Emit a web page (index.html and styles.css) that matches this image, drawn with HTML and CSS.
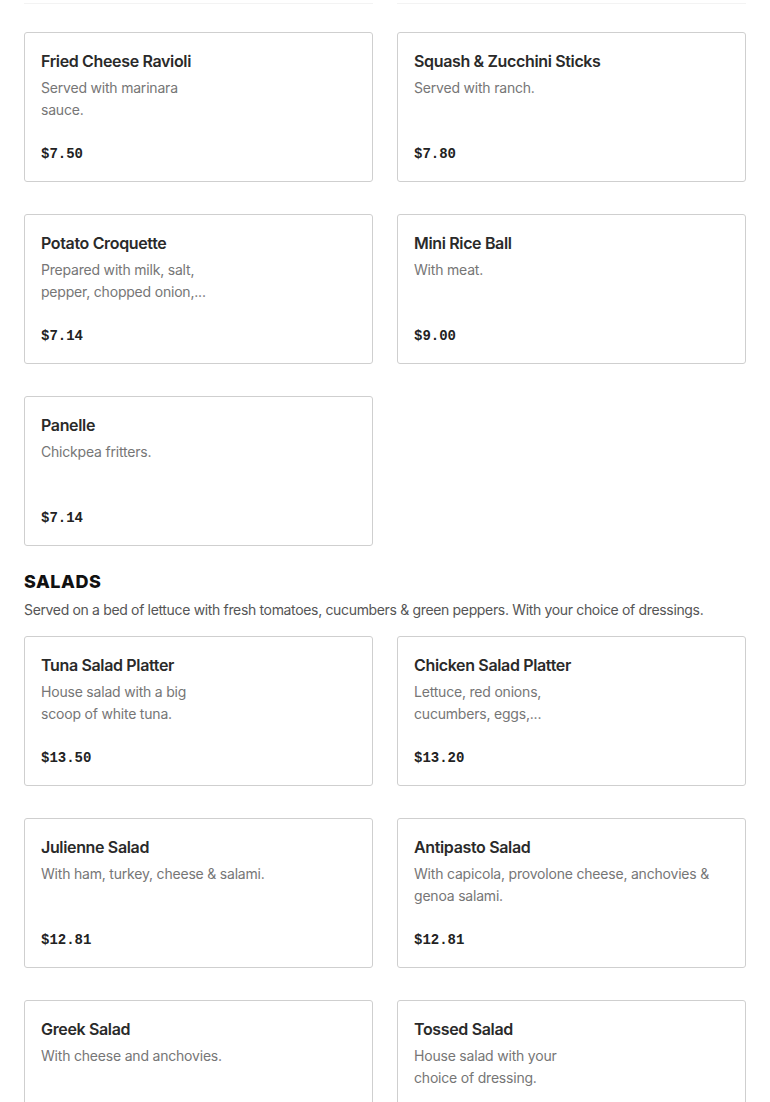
FILE: index.html
```html
<!DOCTYPE html>
<html>
<head>
<meta charset="utf-8">
<link rel="stylesheet" href="styles.css">
</head>
<body>
<div class="page">
  <div class="stub"><div class="stub-card"></div><div class="stub-card"></div></div>

  <div class="grid">
    <div class="card">
      <div class="name">Fried Cheese Ravioli</div>
      <div class="desc">Served with marinara<br>sauce.</div>
      <div class="price">$7.50</div>
    </div>
    <div class="card">
      <div class="name">Squash &amp; Zucchini Sticks</div>
      <div class="desc">Served with ranch.</div>
      <div class="price">$7.80</div>
    </div>
    <div class="card">
      <div class="name">Potato Croquette</div>
      <div class="desc">Prepared with milk, salt,<br>pepper, chopped onion,...</div>
      <div class="price">$7.14</div>
    </div>
    <div class="card">
      <div class="name">Mini Rice Ball</div>
      <div class="desc">With meat.</div>
      <div class="price">$9.00</div>
    </div>
    <div class="card">
      <div class="name">Panelle</div>
      <div class="desc">Chickpea fritters.</div>
      <div class="price">$7.14</div>
    </div>
  </div>

  <section class="section">
    <h2 class="section-title">SALADS</h2>
    <p class="section-desc">Served on a bed of lettuce with fresh tomatoes, cucumbers &amp; green peppers. With your choice of dressings.</p>
    <div class="grid">
      <div class="card">
        <div class="name">Tuna Salad Platter</div>
        <div class="desc">House salad with a big<br>scoop of white tuna.</div>
        <div class="price">$13.50</div>
      </div>
      <div class="card">
        <div class="name">Chicken Salad Platter</div>
        <div class="desc">Lettuce, red onions,<br>cucumbers, eggs,...</div>
        <div class="price">$13.20</div>
      </div>
      <div class="card">
        <div class="name">Julienne Salad</div>
        <div class="desc">With ham, turkey, cheese &amp; salami.</div>
        <div class="price">$12.81</div>
      </div>
      <div class="card">
        <div class="name">Antipasto Salad</div>
        <div class="desc">With capicola, provolone cheese, anchovies &amp;<br>genoa salami.</div>
        <div class="price">$12.81</div>
      </div>
      <div class="card">
        <div class="name">Greek Salad</div>
        <div class="desc">With cheese and anchovies.</div>
        <div class="price">$12.81</div>
      </div>
      <div class="card">
        <div class="name">Tossed Salad</div>
        <div class="desc">House salad with your<br>choice of dressing.</div>
        <div class="price">$6.00</div>
      </div>
    </div>
  </section>
</div>
</body>
</html>
```

FILE: styles.css
```css
* { box-sizing: border-box; }
html, body { margin: 0; padding: 0; background: #fff; }
body { font-family: Inter, "Liberation Sans", sans-serif; color: #2a2a2a; }
.page { padding: 0 24px; }
.stub { display: grid; grid-template-columns: 1fr 1fr; column-gap: 24px; height: 4px; margin-bottom: 28px; }
.stub-card { border-bottom: 1px solid #f3f3f3; }
.grid { display: grid; grid-template-columns: 1fr 1fr; column-gap: 24px; row-gap: 32px; }
.card {
  border: 1px solid #cfcfcf;
  border-radius: 3px;
  height: 150px;
  padding: 18px 16px 17px;
  display: flex;
  flex-direction: column;
}
.name { font-size: 16px; font-weight: 600; line-height: 20px; color: #2a2a2a; letter-spacing: -0.35px; }
.desc { margin-top: 6px; font-size: 14px; line-height: 22px; color: #767676; letter-spacing: -0.2px; }
.price { margin-top: auto; font-family: "Liberation Mono", monospace; font-weight: 700; font-size: 14px; line-height: 20px; color: #222; }
.section { margin-top: 24px; }
.section-title { margin: 0; font-size: 18px; font-weight: 800; line-height: 24px; color: #111; letter-spacing: 0.5px; }
.section-desc { margin: 6px 0 16px; font-size: 14px; line-height: 20px; color: #555; letter-spacing: -0.34px; }
```
